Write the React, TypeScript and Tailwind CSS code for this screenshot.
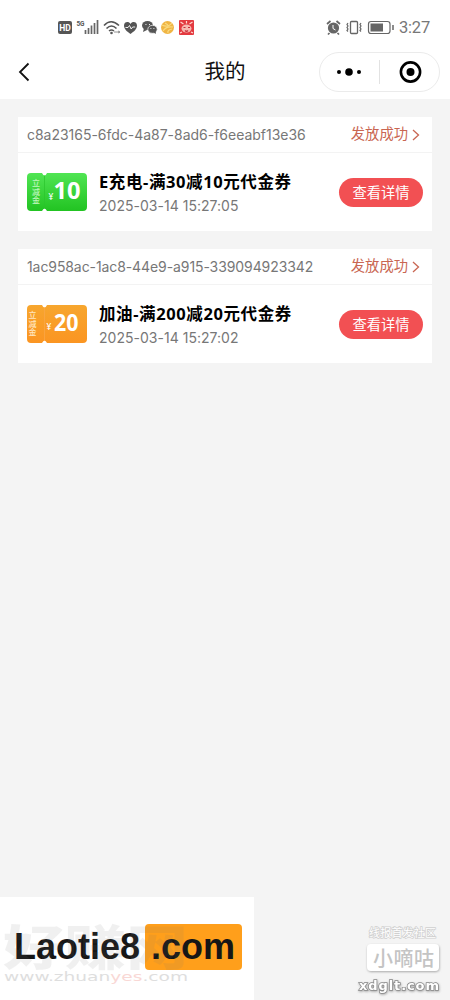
const UI = "font-['Roboto','Noto_Sans_CJK_SC',sans-serif]";

type Voucher = {
  id: string;
  title: string;
  time: string;
  amount: string;
  color: 'green' | 'orange';
  spacing: string;
};

const vouchers: Voucher[] = [
  { id: 'c8a23165-6fdc-4a87-8ad6-f6eeabf13e36', title: 'E充电-满30减10元代金券', time: '2025-03-14 15:27:05', amount: '10', color: 'green', spacing: 'tracking-[-0.02px]' },
  { id: '1ac958ac-1ac8-44e9-a915-339094923342', title: '加油-满200减20元代金券', time: '2025-03-14 15:27:02', amount: '20', color: 'orange', spacing: 'tracking-[-0.09px]' },
];

function StatusLeft() {
  return (
    <svg className="ml-[57px] mt-[17px] h-5 w-[140px]" viewBox="57 17 140 20" fill="none">
      <rect x="58" y="21" width="14" height="13" rx="2" fill="#555" />
      <text x="65" y="30.500" fontSize="8.5" fontWeight="700" fill="#fff" textAnchor="middle" fontFamily="Roboto">HD</text>
      <text x="76.500" y="26" fontSize="6.500" fontWeight="700" fill="#555" fontFamily="Roboto" textLength="8">5G</text>
      <path d="M85.500 30v4M88.500 28v6M91.500 25.500v8.500M94.500 23v11M97.500 20v14" stroke="#666" strokeWidth="1.7" />
      <path d="M104 25.500Q111 18 119 25.500M106.500 28.500Q111.500 23.500 116.500 28.500M109 31Q111.500 29 114 31" stroke="#555" strokeWidth="1.6" />
      <circle cx="111.500" cy="33" r="1.300" fill="#555" />
      <path d="M114 32h6m-2-1 2 1-2 1" stroke="#888" strokeWidth="0.9" />
      <path d="M130.500 34C127 31.500 124 29 124 25.500c0-4 4.800-4.500 6.500-1.600 1.700-2.900 6.500-2.400 6.500 1.600 0 3.500-3 6-6.500 8.500Z" fill="#555" />
      <path d="M125.500 27.500h2.500l1.500-2 1.700 3.500 1.500-2h2.500" stroke="#fff" strokeWidth="0.900" />
      <ellipse cx="147.500" cy="25.500" rx="5.500" ry="4.600" fill="#555" />
      <path d="m144 28-1 4 4-2Z" fill="#555" />
      <ellipse cx="152.500" cy="29.300" rx="4.700" ry="4" fill="#555" stroke="#fff" strokeWidth="0.7" />
      <path d="m153 32 3 2-.5-3Z" fill="#555" />
      <path d="M145.500 24.500h.9M149 24.500h.9M150.500 28.500h.8M153.500 28.500h.8" stroke="#fff" strokeWidth="1" />
      <circle cx="167.500" cy="27.500" r="6.500" fill="#f0b543" />
      <path d="M162 25q6 3 10-2M163 31q3-5 10-4M168 33q-1-3 4-4M165 23l3 2" stroke="#f9da7f" strokeWidth="1.200" />
      <rect x="179" y="20" width="15" height="15" rx="1" fill="#e33a40" />
      <ellipse cx="186.500" cy="28.500" rx="5" ry="4" fill="#f6b8b0" />
      <path d="m180.500 22 3 2m6 0 3-2M186.500 21v2.500M180 33l2-1M193 33l-2-1" stroke="#ffd9d0" strokeWidth="1.200" />
      <path d="M183.500 27.500h2m2.500 0h2M185 30.500q1.500 1.500 3 0" stroke="#c62d3a" strokeWidth="1.200" />
    </svg>
  );
}

function StatusRight() {
  return (
    <div className="mr-[20px] mt-[17px] flex">
      <svg className="h-5 w-[70px]" viewBox="327 17 70 20" fill="none">
        <circle cx="334.500" cy="28" r="5.600" fill="#666" />
        <path d="m328 24 3.500-3M341 24l-3.500-3M330.500 33l-1.500 1.500M338.500 33l1.500 1.500" stroke="#666" strokeWidth="1.700" />
        <path d="M334 25v3.500l2.500 1.500" stroke="#fff" strokeWidth="1" />
        <rect x="351.500" y="21.500" width="7" height="12" rx="1" stroke="#666" strokeWidth="1.300" />
        <path d="m349 23-1 1.500 1 1.500-1 1.500 1 1.500-1 1.500 1 1M362 23l-1 1.500 1 1.500-1 1.500 1 1.500-1 1.500 1 1" stroke="#666" strokeWidth="1.200" />
        <rect x="369.500" y="21.500" width="21.500" height="12" rx="2.500" stroke="#666" strokeWidth="1.200" />
        <rect x="371.500" y="23.500" width="12.500" height="8" fill="#666" />
        <path d="M394 25v5" stroke="#666" strokeWidth="1.500" />
      </svg>
      <span className="ml-[3px] text-[16.5px] leading-[22px] tracking-[-0.2px] text-[#777]">3:27</span>
    </div>
  );
}

function Coupon({ amount, color }: { amount: string; color: 'green' | 'orange' }) {
  const green = color === 'green';
  return (
    <svg className="h-[38px] w-[60px] shrink-0" viewBox="0 0 60 38">
      <defs>
        <linearGradient id={color} x1="0" y1="0" x2="0" y2="1">
          <stop offset="0" stopColor={green ? '#50e553' : '#f7a62e'} />
          <stop offset="1" stopColor={green ? '#22c322' : '#fb9522'} />
        </linearGradient>
      </defs>
      <path d="M4 0h11q2.500 5 5 0H56q4 0 4 4v30q0 4-4 4H20q-2.500-5-5 0H4q-4 0-4-4V4q0-4 4-4Z" fill={`url(#${color})`} />
      <path d="M17.500 2.500v33" stroke={green ? '#2ac42d' : '#f9a84a'} strokeWidth="0.700" />
      <g fill={green ? '#bff6bc' : '#ffe6c0'} fontFamily="Noto Sans CJK SC" fontWeight="500" fontSize="8" textAnchor="middle">
        <text x={green ? 9 : 5.500} y="13">立</text>
        <text x={green ? 9 : 5.500} y="21.500">减</text>
        <text x={green ? 9 : 5.500} y="30">金</text>
      </g>
      <text x={green ? 21.500 : 19.500} y={green ? 26.500 : 25} fontFamily="Roboto" fontSize="9" fill="#fff">¥</text>
      <text x={green ? 26.500 : 27} y={green ? 26 : 25.500} fontFamily="Open Sans" fontWeight="700" fontSize={green ? 24 : 22.500} textLength={green ? 27 : 24.500} lengthAdjust="spacingAndGlyphs" fill="#fff">{amount}</text>
    </svg>
  );
}

function VoucherCard({ voucher }: { voucher: Voucher }) {
  return (
    <article className="h-[114px] bg-white">
      <div className="flex h-9 items-center justify-between border-b border-[#f3f3f3] pl-[9px] pr-[12px]">
        <span className={`font-['Inter',sans-serif] text-[14px] text-[#777] ${voucher.spacing}`}>{voucher.id}</span>
        <span className="flex items-center pt-px text-[14.3px] text-[#c96652]">
          发放成功
          <svg className="ml-1 h-3 w-[8px]" viewBox="0 0 8 12" fill="none" stroke="#c96652" strokeWidth="1.300"><path d="m1 1 5.500 5L1 11" /></svg>
        </span>
      </div>
      <div className="flex h-[78px] items-center pl-[9px] pr-[9px]">
        <Coupon amount={voucher.amount} color={voucher.color} />
        <div className="ml-3 flex-1 whitespace-nowrap pt-[3px]">
          <h2 className="font-['Noto_Sans','Noto_Sans_CJK_SC',sans-serif] text-[16.5px] font-bold leading-[24px] tracking-[0.6px] text-black">{voucher.title}</h2>
          <p className="font-['Inter',sans-serif] text-[14px] leading-[24px] tracking-[0.02px] text-[#777]">{voucher.time}</p>
        </div>
        <button className="h-[29px] w-[84px] shrink-0 rounded-full bg-[#f25053] text-[14.3px] leading-[30px] text-white">查看详情</button>
      </div>
    </article>
  );
}

export default function App() {
  return (
    <div className={`flex h-[1000px] w-[450px] flex-col overflow-hidden bg-[#f4f4f4] ${UI}`}>
      <header className="h-[99px] shrink-0 bg-white">
        <div className="flex h-[51px] justify-between">
          <StatusLeft />
          <StatusRight />
        </div>
        <div className="grid h-[42px] grid-cols-[1fr_90px_1fr] items-center">
          <svg className="ml-[17px] h-5 w-[13px]" viewBox="0 0 13 20" fill="none" stroke="#111" strokeWidth="1.800"><path d="M11.500 1.500 3 10l8.500 8.500" /></svg>
          <h1 className="text-center text-[20.5px] leading-[42px] text-[#111]">我的</h1>
          <div className="ml-[49px] flex h-10 w-[121px] items-center rounded-full border border-[#ebebeb]">
            <svg className="h-10 w-full" viewBox="0 0 119 40" fill="none">
              <circle cx="19" cy="20" r="2" fill="#000" /><circle cx="29" cy="20" r="3.800" fill="#000" /><circle cx="39" cy="20" r="2" fill="#000" />
              <path d="M59.500 8v24" stroke="#e2e2e2" />
              <circle cx="90.500" cy="20" r="9.600" stroke="#000" strokeWidth="2.600" /><circle cx="90.500" cy="20" r="4" fill="#000" />
            </svg>
          </div>
        </div>
      </header>
      <main className="flex flex-1 flex-col gap-[18px] px-[18px] pt-[18px]">
        {vouchers.map((voucher) => <VoucherCard key={voucher.id} voucher={voucher} />)}
      </main>
      <footer className="flex h-[103px] shrink-0 items-end justify-between">
        <div className="relative h-[103px] w-[254px] bg-white">
          <div className="flex h-full items-center pl-[14px] font-['Liberation_Sans',sans-serif] text-[36px] font-bold leading-[46px] text-[#161616]">
            <span className="mt-[-3px] w-[131px] leading-[46px]">Laotie8</span>
            <span className="mt-[-3px] h-[46px] w-[97px] rounded-[4px] bg-[#ff9f1b] pl-[6px] leading-[46px]">.com</span>
          </div>
          <svg className="absolute left-0 top-5 h-[70px] w-[200px] overflow-visible" viewBox="0 917 200 70">
            <text x="3" y="965" fill="#777" opacity="0.1" fontFamily="Noto Sans CJK SC" fontWeight="900" fontSize="48" textLength="185" lengthAdjust="spacingAndGlyphs">好赚网</text>
            <text x="4" y="981" fontFamily="DejaVu Sans" fontSize="13" textLength="184" lengthAdjust="spacingAndGlyphs" fill="#dedede">www.zhuan<tspan fill="#f9d8d5">yes</tspan>.com</text>
          </svg>
        </div>
        <svg className="h-[82px] w-[100px]" viewBox="350 918 100 82">
          <defs><filter id="shadow" x="-20%" y="-20%" width="150%" height="160%"><feDropShadow dx="0.500" dy="1" stdDeviation="1" floodColor="#888" floodOpacity="0.700" /></filter></defs>
          <text x="369" y="937" fontFamily="Noto Sans CJK SC" fontSize="11" textLength="67" fill="#fff" stroke="#d0d0d0" strokeWidth="1.500" paintOrder="stroke">线报首发社区</text>
          <rect x="367" y="944" width="72" height="27" rx="4" fill="#fff" filter="url(#shadow)" />
          <text x="373" y="965.500" fontFamily="Noto Sans CJK SC" fontSize="20" fontWeight="500" textLength="61" fill="#c4c4c4">小嘀咕</text>
          <text x="359" y="990" fontFamily="DejaVu Sans" fontSize="13" fontWeight="700" textLength="80" fill="#fff" stroke="#888" strokeWidth="1.500" paintOrder="stroke" filter="url(#shadow)">xdglt.com</text>
        </svg>
      </footer>
    </div>
  );
}
